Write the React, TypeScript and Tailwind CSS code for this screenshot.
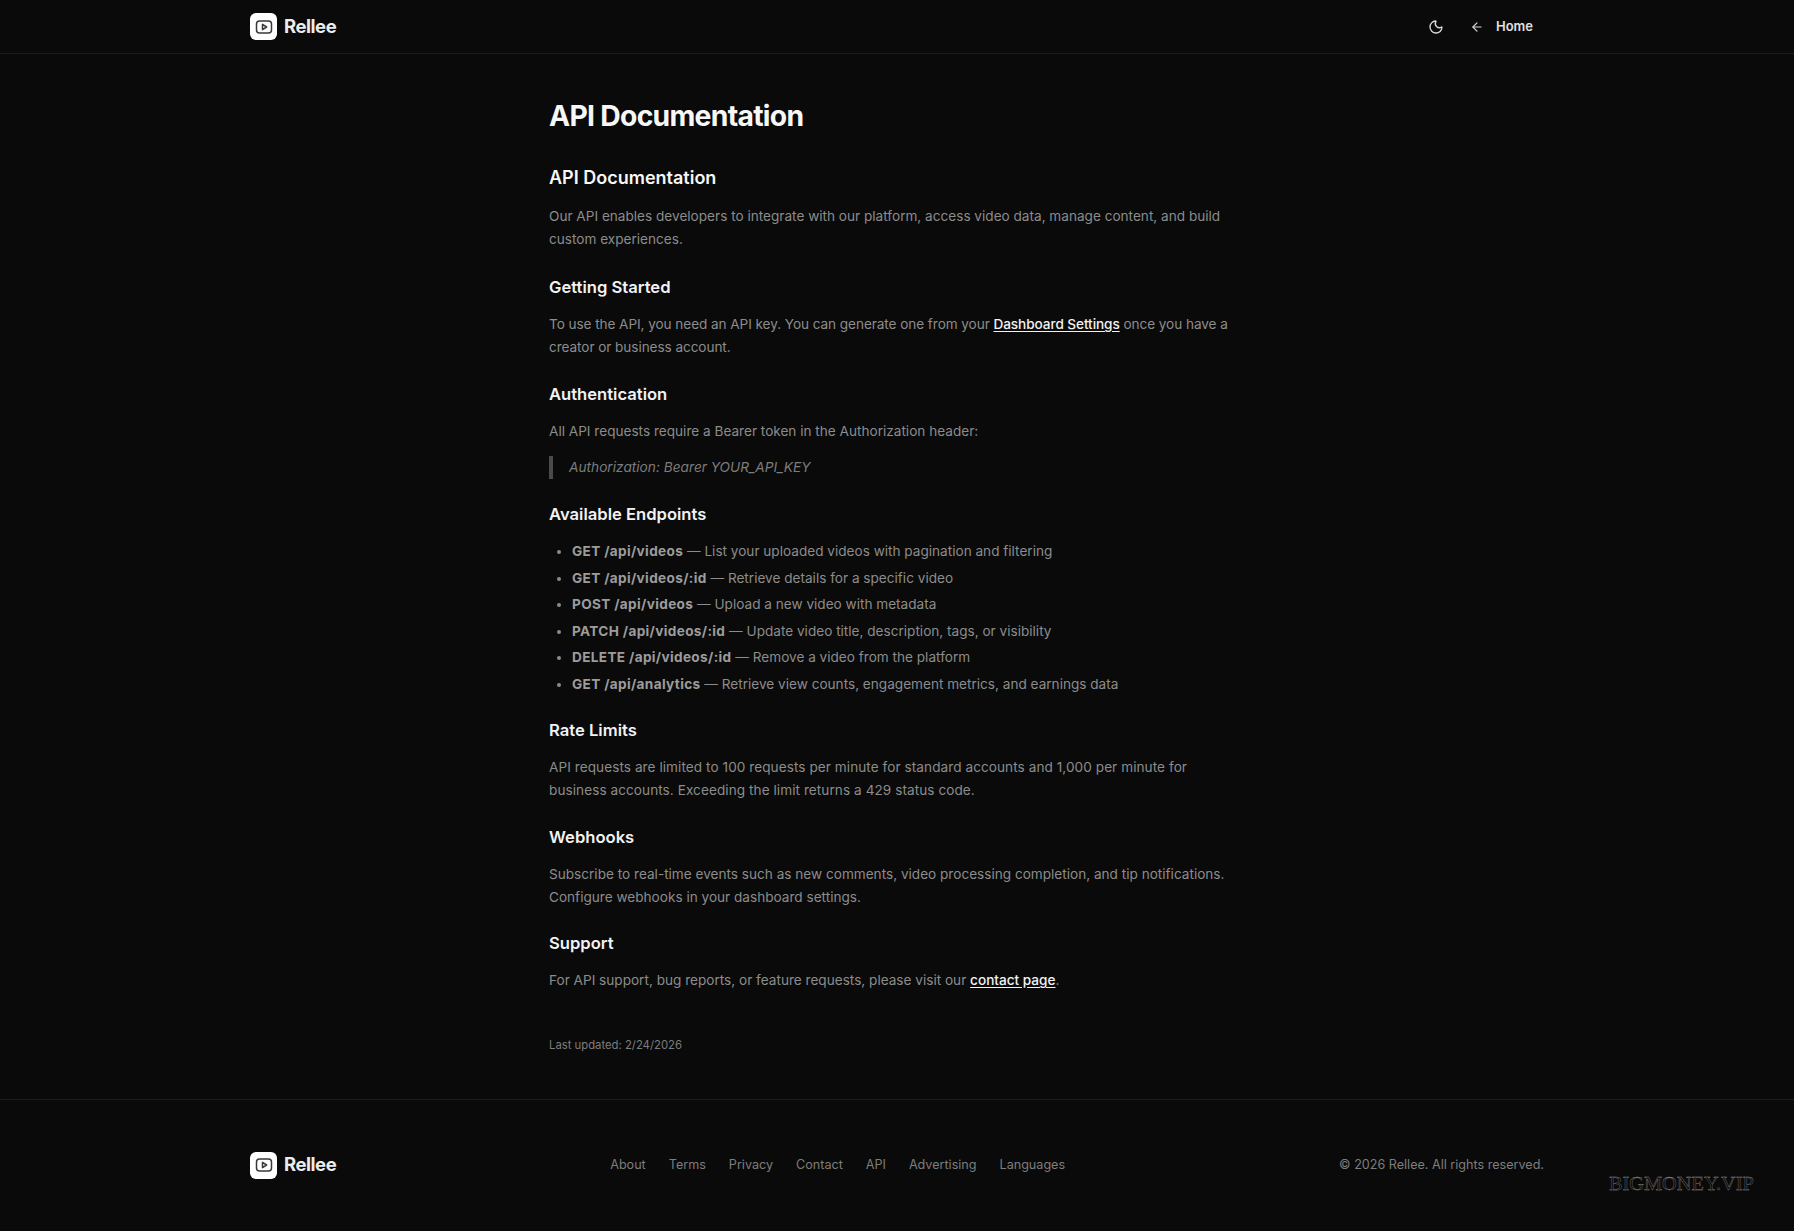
import { ArrowLeft, Moon } from "lucide-react";

const Logo = () => (
  <div className="flex items-center gap-[7px]">
    <div className="w-[27px] h-[27px] rounded-[6px] bg-white flex items-center justify-center">
      <svg width="18" height="18" viewBox="0 0 24 24" fill="none" stroke="#3a3a3a" strokeWidth="2" strokeLinecap="round" strokeLinejoin="round">
        <rect x="2" y="4" width="20" height="16" rx="4" />
        <path d="M10 8.5v7l5.5-3.5z" />
      </svg>
    </div>
    <span className="text-[18.5px] font-bold text-[#ececec] tracking-tight">Rellee</span>
  </div>
);

const H3 = ({ children }: { children: string }) => (
  <h3 className="text-[16.6px] font-semibold text-[#f2f2f2] mt-[23px] mb-[14px] leading-[24px]">{children}</h3>
);

const P = ({ children, className = "" }: { children: React.ReactNode; className?: string }) => (
  <p className={`text-[13.6px] leading-[22.75px] text-[#8c8c8c] ${className}`}>{children}</p>
);

const A = ({ children }: { children: string }) => (
  <a className="text-[#f2f2f2] font-medium underline underline-offset-2">{children}</a>
);

const endpoints = [
  ["GET /api/videos", "List your uploaded videos with pagination and filtering"],
  ["GET /api/videos/:id", "Retrieve details for a specific video"],
  ["POST /api/videos", "Upload a new video with metadata"],
  ["PATCH /api/videos/:id", "Update video title, description, tags, or visibility"],
  ["DELETE /api/videos/:id", "Remove a video from the platform"],
  ["GET /api/analytics", "Retrieve view counts, engagement metrics, and earnings data"],
];

const footerLinks = ["About", "Terms", "Privacy", "Contact", "API", "Advertising", "Languages"];

export default function App() {
  return (
    <div className="min-h-screen bg-[#0a0a0a] font-['Inter',sans-serif] relative">
      {/* Header */}
      <header className="h-[54px] border-b border-[#1c1c1c]">
        <div className="max-w-[1344px] mx-auto px-[25px] h-full flex items-center justify-between">
          <Logo />
          <div className="flex items-center gap-[26px] pr-[11px]">
            <Moon size={16} className="text-[#d8d8d8]" />
            <div className="flex items-center gap-[12px]">
              <ArrowLeft size={14} className="text-[#d8d8d8]" />
              <span className="text-[13px] font-semibold text-[#e0e0e0]">Home</span>
            </div>
          </div>
        </div>
      </header>

      {/* Content */}
      <main className="max-w-[768px] mx-auto pl-9 pr-[43px] pt-[44px] pb-[45.5px]">
        <h1 className="text-[28.3px] font-bold leading-[36px] tracking-tight text-[#f7f7f7] mb-[30px]">API Documentation</h1>
        <h2 className="text-lg font-semibold leading-[28px] text-[#f7f7f7] mb-[13px]">API Documentation</h2>
        <div className="pb-[1.5px]">
          <P>Our API enables developers to integrate with our platform, access video data, manage content, and build custom experiences.</P>
        </div>

        <H3>Getting Started</H3>
        <P className="tracking-[-0.07px]">
          To use the API, you need an API key. You can generate one from your <A>Dashboard Settings</A> once you have a creator or business account.
        </P>

        <H3>Authentication</H3>
        <P>All API requests require a Bearer token in the Authorization header:</P>
        <blockquote className="border-l-4 border-[#4a4a4a] pl-4 mt-[14px] text-[13.7px] leading-[22.75px] italic text-[#7d7d7d]">
          Authorization: Bearer YOUR_API_KEY
        </blockquote>

        <H3>Available Endpoints</H3>
        <ul className="list-disc pl-[23px] space-y-[3.75px] text-[13.6px] leading-[22.75px] text-[#8c8c8c] marker:text-[#8c8c8c]">
          {endpoints.map(([route, desc]) => (
            <li key={route}>
              <strong className="font-bold tracking-[0.35px] text-[#9c9c9c]">{route}</strong> — {desc}
            </li>
          ))}
        </ul>

        <H3>Rate Limits</H3>
        <P className="tracking-[0.06px]">API requests are limited to 100 requests per minute for standard accounts and 1,000 per minute for business accounts. Exceeding the limit returns a 429 status code.</P>

        <H3>Webhooks</H3>
        <P>Subscribe to real-time events such as new comments, video processing completion, and tip notifications. Configure webhooks in your dashboard settings.</P>

        <H3>Support</H3>
        <P>
          For API support, bug reports, or feature requests, please visit our <A>contact page</A>.
        </P>

        <p className="text-[11.3px] leading-4 text-[#7d7d7d] mt-[45px]">Last updated: 2/24/2026</p>
      </main>

      {/* Footer */}
      <footer className="border-t border-[#1c1c1c] h-[132px]">
        <div className="max-w-[1344px] mx-auto px-[25px] h-full flex items-center justify-between">
          <Logo />
          <nav className="flex items-center gap-[23px] text-[12.6px] text-[#7d7d7d]">
            {footerLinks.map((l) => (
              <a key={l}>{l}</a>
            ))}
          </nav>
          <p className="text-[12.6px] text-[#7d7d7d]">© 2026 Rellee. All rights reserved.</p>
        </div>
      </footer>

      {/* watermark */}
      <div className="absolute left-[1609px] top-[1172px] origin-left scale-x-[1.13] font-['Liberation_Serif',serif] text-[18px] leading-6 text-transparent [-webkit-text-stroke:0.3px_#8a8a8a]">
        BIGMONEY.VIP
      </div>
    </div>
  );
}
